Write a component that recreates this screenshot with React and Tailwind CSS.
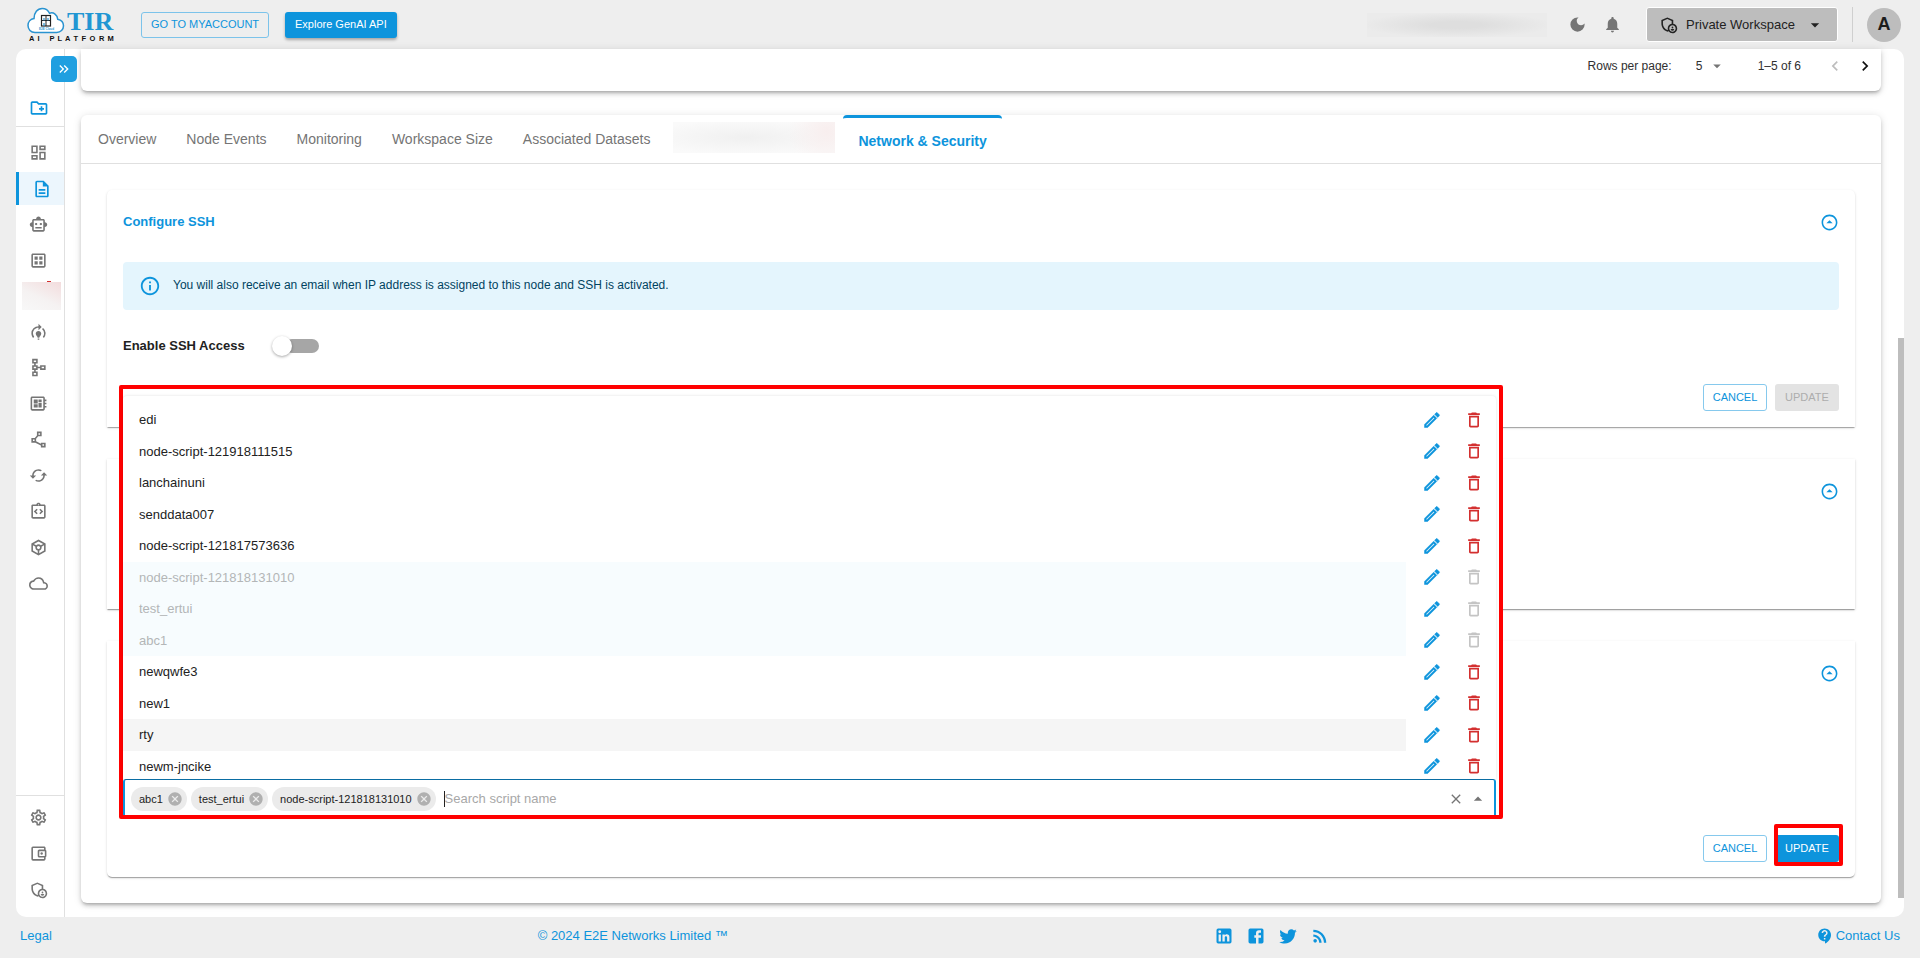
import React, { useState } from 'react';
import {
  MdOutlineCreateNewFolder,
  MdOutlineDashboard,
  MdOutlineDescription,
  MdOutlineSmartToy,
  MdOutlineDataset,
  MdModelTraining,
  MdOutlineSchema,
  MdOutlineDeveloperBoard,
  MdOutlinePolyline,
  MdOutlineCached,
  MdOutlineIntegrationInstructions,
  MdOutlineToken,
  MdOutlineCloud,
  MdOutlineSettings,
  MdOutlineAccountBalanceWallet,
  MdOutlineAdminPanelSettings,
  MdOutlineArrowDropDownCircle,
  MdDeleteOutline,
  MdCancel,
  MdContactSupport,
  MdRssFeed,
  MdDarkMode,
  MdNotifications,
  MdArrowDropDown,
  MdArrowDropUp,
  MdClose,
  MdChevronLeft,
  MdChevronRight,
  MdKeyboardDoubleArrowRight,
  MdOutlineInfo,
} from 'react-icons/md';

const SIDE_ITEMS = [
  { label: 'Dashboard', Icon: MdOutlineDashboard },
  { label: 'Nodes', Icon: MdOutlineDescription, active: true },
  { label: 'Assistants', Icon: MdOutlineSmartToy },
  { label: 'Datasets', Icon: MdOutlineDataset },
  { label: 'Preview', hidden: true },
  { label: 'Model training', Icon: MdModelTraining },
  { label: 'Pipelines', Icon: MdOutlineSchema },
  { label: 'Inference', Icon: MdOutlineDeveloperBoard },
  { label: 'Vector database', Icon: MdOutlinePolyline },
  { label: 'Sync', Icon: MdOutlineCached },
  { label: 'Integrations', Icon: MdOutlineIntegrationInstructions },
  { label: 'Models', Icon: MdOutlineToken },
  { label: 'Cloud', Icon: MdOutlineCloud },
];

const SIDE_FOOTER = [
  { label: 'Settings', Icon: MdOutlineSettings },
  { label: 'Billing', Icon: MdOutlineAccountBalanceWallet },
  { label: 'Access', Icon: MdOutlineAdminPanelSettings },
];

const TABS = ['Overview', 'Node Events', 'Monitoring', 'Workspace Size', 'Associated Datasets'];

const SCRIPTS = [
  { name: 'edi' },
  { name: 'node-script-121918111515' },
  { name: 'lanchainuni' },
  { name: 'senddata007' },
  { name: 'node-script-121817573636' },
  { name: 'node-script-121818131010', selected: true },
  { name: 'test_ertui', selected: true },
  { name: 'abc1', selected: true },
  { name: 'newqwfe3' },
  { name: 'new1' },
  { name: 'rty', hover: true },
  { name: 'newm-jncike' },
];

const CHIPS = ['abc1', 'test_ertui', 'node-script-121818131010'];

const SOCIAL = [
  {
    label: 'LinkedIn',
    path: 'M19 3a2 2 0 0 1 2 2v14a2 2 0 0 1-2 2H5a2 2 0 0 1-2-2V5a2 2 0 0 1 2-2h14m-.5 15.5v-5.3a3.26 3.26 0 0 0-3.26-3.26c-.85 0-1.84.52-2.32 1.3v-1.11h-2.79v8.37h2.79v-4.93c0-.77.62-1.4 1.39-1.4a1.4 1.4 0 0 1 1.4 1.4v4.93h2.79M6.88 8.56a1.68 1.68 0 0 0 1.68-1.68c0-.93-.75-1.69-1.68-1.69a1.69 1.69 0 0 0-1.69 1.69c0 .93.76 1.68 1.69 1.68m1.39 9.94v-8.37H5.5v8.37h2.77z',
  },
  {
    label: 'Facebook',
    path: 'M5 3h14a2 2 0 0 1 2 2v14a2 2 0 0 1-2 2H5a2 2 0 0 1-2-2V5a2 2 0 0 1 2-2m13 2h-2.5A3.5 3.5 0 0 0 12 8.5V11h-2v3h2v7h3v-7h3v-3h-3V9a1 1 0 0 1 1-1h2V5z',
  },
  {
    label: 'Twitter',
    path: 'M22.46 6c-.77.35-1.6.58-2.46.69.88-.53 1.56-1.37 1.88-2.38-.83.5-1.75.85-2.72 1.05C18.37 4.5 17.26 4 16 4c-2.35 0-4.27 1.92-4.27 4.29 0 .34.04.67.11.98C8.28 9.09 5.11 7.38 3 4.79c-.37.63-.58 1.37-.58 2.15 0 1.49.75 2.81 1.91 3.56-.71 0-1.37-.2-1.95-.5v.03c0 2.08 1.48 3.82 3.44 4.21a4.22 4.22 0 0 1-1.93.07 4.28 4.28 0 0 0 4 2.98 8.521 8.521 0 0 1-5.33 1.84c-.34 0-.68-.02-1.02-.06C3.44 20.29 5.7 21 8.12 21 16 21 20.33 14.46 20.33 8.79c0-.19 0-.37-.01-.56.84-.6 1.56-1.36 2.14-2.23z',
  },
];

const CARD_SHADOW =
  'shadow-[0_2px_1px_-1px_rgba(0,0,0,0.2),0_1px_1px_0_rgba(0,0,0,0.14),0_1px_3px_0_rgba(0,0,0,0.12)]';
const PANEL_SHADOW =
  'shadow-[0_3px_3px_-2px_rgba(0,0,0,0.2),0_3px_4px_0_rgba(0,0,0,0.14),0_1px_8px_0_rgba(0,0,0,0.12)]';

function Logo() {
  return (
    <svg width="90" height="36" viewBox="0 0 90 36" role="img" aria-label="TIR AI Platform">
      <path
        d="M9 25.5C4.8 25.5 2 22.5 2 18.6C2 14.8 4.6 12 8 11.6C8 5.6 11.5 1.5 16.2 1.5C19.5 1.5 22.2 3.3 23.5 6.2C27.5 4.8 31.5 7.8 31.7 12.2C35 13 37.5 15.4 37.5 18.8C37.5 22.6 34.6 25.5 30.7 25.5Z"
        fill="#fff"
        stroke="#2a93d0"
        strokeWidth="1.5"
      />
      <rect x="15.5" y="8.5" width="9" height="10.5" fill="none" stroke="#222" strokeWidth="1.2" />
      <path d="M20 8.5V19M15.5 13.5H24.5" stroke="#222" strokeWidth="1" fill="none" />
      <path d="M18 11v2.5M22 11v2.5M18 16v3" stroke="#2a93d0" strokeWidth="1.2" />
      <text x="13" y="23" fontFamily="Liberation Sans, sans-serif" fontSize="3" fontWeight="700" fill="#2a93d0">
        E2E Cloud
      </text>
      <text x="41" y="23" fontFamily="Liberation Serif, serif" fontSize="26" fontWeight="700" fill="#2196d3">
        TIR
      </text>
      <text
        x="3 11.5 18 23.5 31.5 39 47.5 55.5 63.5 73 81.5"
        y="34"
        fontFamily="Liberation Sans, sans-serif"
        fontSize="7.5"
        fontWeight="700"
        fill="#111"
      >
        AI PLATFORM
      </text>
    </svg>
  );
}

function PencilIcon() {
  return (
    <svg width="20" height="20" viewBox="0 0 24 24" fill="currentColor" stroke="currentColor" strokeWidth="0.6">
      <path d="m14.06 9.02.92.92L5.92 19H5v-.92l9.06-9.06M17.66 3c-.25 0-.51.1-.7.29l-1.83 1.83 3.75 3.75 1.83-1.83c.39-.39.39-1.02 0-1.41l-2.34-2.34c-.2-.2-.45-.29-.71-.29zm-3.6 3.19L3 17.25V21h3.75L17.81 9.94l-3.75-3.75z" />
    </svg>
  );
}

function SideButton({ label, Icon, active }) {
  return (
    <a
      href="#"
      aria-label={label}
      className={
        active
          ? 'flex h-[33px] w-full items-center justify-center border-l-[3px] border-[#0d94dc] bg-[#ecf6fd] text-[#0d94dc]'
          : 'flex h-[33px] w-full items-center justify-center pr-[3px] text-[#757575]'
      }
    >
      <Icon size={active ? 20 : 19} />
    </a>
  );
}

function CancelButton() {
  return (
    <button
      type="button"
      className="h-[27px] w-16 rounded-[3px] border border-[#86c9ed] text-[11px] text-[#0d94dc]"
    >
      CANCEL
    </button>
  );
}

function CollapseButton() {
  return (
    <button type="button" aria-label="Collapse section" className="ml-auto text-[#0d94dc]">
      <MdOutlineArrowDropDownCircle size={19} className="rotate-180" />
    </button>
  );
}

function Header() {
  return (
    <header className="flex h-[49px] shrink-0 items-center pr-[19px] pl-[26px]">
      <Logo />
      <a
        href="#"
        className="ml-[25px] flex h-[26px] w-32 items-center justify-center rounded-[3px] border border-[#7cc3ea] text-[11px] text-[#0d94dc]"
      >
        GO TO MYACCOUNT
      </a>
      <button
        type="button"
        className="ml-4 h-[26px] rounded-[3px] bg-[#0d94dc] px-[10px] text-[11px] text-white shadow-[0_2px_3px_rgba(0,0,0,0.3)]"
      >
        Explore GenAI API
      </button>
      <div className="ml-auto h-6 w-[180px] bg-[radial-gradient(ellipse_at_center,#dedede_20%,#ebebeb_75%)]" />
      <button type="button" aria-label="Dark mode" className="ml-[21px] text-[#757575]">
        <MdDarkMode size={19} />
      </button>
      <button type="button" aria-label="Notifications" className="ml-4 text-[#757575]">
        <MdNotifications size={19} />
      </button>
      <button
        type="button"
        className="ml-6 flex h-[35px] w-48 items-center rounded-[3px] border border-white bg-[#bdbdbd] pl-3 text-[13px] text-[#222]"
      >
        <MdOutlineAdminPanelSettings size={19} className="mr-2" />
        Private Workspace
        <MdArrowDropDown size={20} className="ml-[10px]" />
      </button>
      <span className="ml-[14px] h-[35px] w-px bg-[#cfcfcf]" />
      <button
        type="button"
        aria-label="Account"
        className="ml-[14px] size-[34px] rounded-full bg-[#bdbdbd] text-[18px] font-bold text-[#1c1c1c]"
      >
        A
      </button>
    </header>
  );
}

function Sidebar() {
  return (
    <nav aria-label="Main" className="relative flex w-[49px] shrink-0 flex-col border-r border-[#e0e0e0] pb-1">
      <button
        type="button"
        aria-label="Expand menu"
        className="absolute top-[7px] left-[35px] z-10 flex size-[26px] items-center justify-center rounded-[5px] bg-[#1f9fe0] text-white"
      >
        <MdKeyboardDoubleArrowRight size={16} />
      </button>
      <a
        href="#"
        aria-label="New project"
        className="flex h-[78px] items-end justify-center border-b border-[#e0e0e0] pr-[3px] pb-2 text-[#0d94dc]"
      >
        <MdOutlineCreateNewFolder size={20} />
      </a>
      <div className="grid h-[474px] auto-rows-fr items-center pt-2">
        {SIDE_ITEMS.map((item) =>
          item.hidden ? (
            <div
              key={item.label}
              className="relative ml-[6px] h-7 w-[39px] bg-[linear-gradient(205deg,#f3dcdd,#f5f2f2_55%,#f8f8f8)]"
            >
              <span className="absolute -top-px left-[25px] h-px w-1 bg-[#d32f2f]" />
            </div>
          ) : (
            <SideButton key={item.label} {...item} />
          ),
        )}
      </div>
      <div className="mt-auto flex flex-col gap-[3px] border-t border-[#e0e0e0] pt-[5px] pb-[7px]">
        {SIDE_FOOTER.map((item) => (
          <SideButton key={item.label} {...item} />
        ))}
      </div>
    </nav>
  );
}

function Pagination() {
  return (
    <div
      className={`flex h-[42px] items-start justify-end rounded-b-md bg-white pt-[5px] pr-[6px] text-xs leading-6 text-[#303030] ${PANEL_SHADOW}`}
    >
      <label htmlFor="rows">Rows per page:</label>
      <span className="relative ml-[22px] flex items-center">
        <select id="rows" defaultValue="5" className="h-6 w-8 appearance-none pl-[2px] outline-none">
          <option>5</option>
          <option>10</option>
        </select>
        <MdArrowDropDown size={18} className="pointer-events-none absolute right-0 text-[#757575]" />
      </span>
      <span className="ml-8">1–5 of 6</span>
      <button type="button" aria-label="Previous page" disabled className="ml-6 flex h-6 items-center text-[#bdbdbd]">
        <MdChevronLeft size={20} />
      </button>
      <button type="button" aria-label="Next page" className="ml-[10px] flex h-6 items-center text-[#111]">
        <MdChevronRight size={20} />
      </button>
    </div>
  );
}

function ScriptPicker() {
  const [query, setQuery] = useState('');
  return (
    <div className="absolute -right-[7px] bottom-0 -left-1 rounded-[2px] border-4 border-[#f00] bg-white pt-[7px] pr-[3px]">
      <div className="h-[383px] overflow-hidden rounded-t-[4px] pt-2 shadow-[0_0_3px_rgba(0,0,0,0.12)]">
        <ul aria-label="Scripts" className="grid h-[378px] auto-rows-fr text-[13px] text-[#222]">
          {SCRIPTS.map((s) => (
            <li key={s.name} className="flex items-center">
              <span
                className={
                  s.selected
                    ? 'flex h-full flex-1 items-center bg-[#f7fcfe] pl-4 text-[#b3b6b7]'
                    : s.hover
                      ? 'flex h-full flex-1 items-center bg-[#f5f5f5] pl-4'
                      : 'flex h-full flex-1 items-center pl-4'
                }
              >
                {s.name}
              </span>
              <button type="button" aria-label={`Edit ${s.name}`} className="ml-4 text-[#0d94dc]">
                <PencilIcon />
              </button>
              <button
                type="button"
                aria-label={`Delete ${s.name}`}
                disabled={s.selected}
                className={s.selected ? 'mr-3 ml-[22px] text-[#c4c4c4]' : 'mr-3 ml-[22px] text-[#d32f2f]'}
              >
                <MdDeleteOutline size={20} />
              </button>
            </li>
          ))}
        </ul>
      </div>
      <div className="flex h-9 items-center gap-1 rounded-t-[3px] border-x-2 border-t border-x-[#0d94dc] border-t-[#0a6da3] bg-white pt-[3px] pr-[6px] pl-[6px]">
        {CHIPS.map((c) => (
          <span key={c} className="flex h-6 items-center rounded-full bg-[#ebebeb] pr-1 pl-2 text-[11px] text-[#222]">
            {c}
            <button type="button" aria-label={`Remove ${c}`} className="ml-1 text-[#b0b0b0]">
              <MdCancel size={16} />
            </button>
          </span>
        ))}
        <span className="ml-1 h-4 w-px bg-[#222]" />
        <input
          type="text"
          aria-label="Search script name"
          placeholder="Search script name"
          value={query}
          onChange={(e) => setQuery(e.target.value)}
          className="-ml-1 min-w-0 flex-1 text-[13px] outline-none placeholder:text-[#a8a8a8]"
        />
        <button type="button" aria-label="Clear" className="text-[#757575]">
          <MdClose size={16} />
        </button>
        <button type="button" aria-label="Close list" className="text-[#757575]">
          <MdArrowDropUp size={20} />
        </button>
      </div>
    </div>
  );
}

function Panels() {
  const card = `bg-white px-4 ${CARD_SHADOW}`;
  return (
    <div className="flex flex-col p-[26px]">
      <section className={`${card} h-[237px] rounded-t-[5px]`}>
        <div className="flex h-16 items-center">
          <h2 className="text-[13px] font-bold text-[#0d94dc]">Configure SSH</h2>
          <CollapseButton />
        </div>
        <div className="mt-2 flex h-12 items-center rounded-[4px] bg-[#e4f5fd] pl-4 text-xs text-[#014361]">
          <MdOutlineInfo size={22} className="mr-3 text-[#0d94dc]" />
          <p className="pb-[3px]">
            You will also receive an email when IP address is assigned to this node and SSH is activated.
          </p>
        </div>
        <div className="mt-[26px] flex h-5 items-center">
          <label htmlFor="ssh" className="text-[13px] font-bold text-[#222]">
            Enable SSH Access
          </label>
          <span className="relative ml-[27px] flex h-5 w-[47px] items-center">
            <input
              id="ssh"
              type="checkbox"
              role="switch"
              className="ml-auto h-[14px] w-[34px] appearance-none rounded-full bg-[#a6a6a6]"
            />
            <span className="pointer-events-none absolute top-0 left-0 size-5 rounded-full bg-white shadow-[0_1px_3px_rgba(0,0,0,0.35)]" />
          </span>
        </div>
        <div className="mt-7 flex justify-end gap-2">
          <CancelButton />
          <button type="button" disabled className="h-[27px] w-16 rounded-[3px] bg-[#e3e3e3] text-[11px] text-[#adadad]">
            UPDATE
          </button>
        </div>
      </section>

      <section className={`${card} mt-8 h-[150px]`}>
        <div className="flex h-16 items-center">
          <CollapseButton />
        </div>
      </section>

      <section className={`${card} mt-8 h-[236px] rounded-b-[5px]`}>
        <div className="flex h-16 items-center">
          <CollapseButton />
        </div>
        <div className="relative h-[114px] w-4/5">
          <ScriptPicker />
        </div>
        <div className="mt-4 flex justify-end gap-2">
          <CancelButton />
          <span className="relative flex">
            <button type="button" className="h-[27px] w-16 rounded-[3px] bg-[#0d94dc] text-[11px] text-white">
              UPDATE
            </button>
            <span className="pointer-events-none absolute -top-[11px] -right-1 -bottom-1 -left-px rounded-[2px] border-4 border-[#f00]" />
          </span>
        </div>
      </section>
    </div>
  );
}

function Main() {
  return (
    <main className="flex-1 pr-[23px] pl-4">
      <Pagination />
      <div className={`mt-6 rounded-md bg-white ${PANEL_SHADOW}`}>
        <div role="tablist" className="flex h-[49px] border-b border-[#e0e0e0] pl-[2px] text-sm text-[#757575]">
          {TABS.map((t) => (
            <button key={t} type="button" role="tab" className="px-[15px]">
              {t}
            </button>
          ))}
          <div className="mx-2 mt-[7px] h-[31px] w-[162px] bg-[radial-gradient(circle_at_95%_30%,#f8eeee,transparent_25%),radial-gradient(ellipse_at_45%_50%,#f0f0f0,#fafafa_80%)]" />
          <button
            type="button"
            role="tab"
            aria-selected="true"
            className="rounded-t-[4px] border-t-[3px] border-[#0d94dc] px-[15px] font-bold text-[#0d94dc]"
          >
            Network &amp; Security
          </button>
        </div>
        <Panels />
      </div>
    </main>
  );
}

function Footer() {
  return (
    <footer className="flex h-[41px] shrink-0 items-center justify-between px-5 pb-1 text-[13px] text-[#0d94dc]">
      <a href="#">Legal</a>
      <p>© 2024 E2E Networks Limited ™</p>
      <div className="flex items-center gap-3">
        {SOCIAL.map((s) => (
          <a key={s.label} href="#" aria-label={s.label}>
            <svg width="20" height="20" viewBox="0 0 24 24" fill="currentColor">
              <path d={s.path} />
            </svg>
          </a>
        ))}
        <a href="#" aria-label="RSS">
          <MdRssFeed size={20} />
        </a>
      </div>
      <a href="#" className="flex items-center gap-[2px]">
        <MdContactSupport size={18} />
        Contact Us
      </a>
    </footer>
  );
}

export default function App() {
  return (
    <div className="flex min-h-screen flex-col bg-[#eeeeee] font-['Liberation_Sans',Arial,sans-serif]">
      <Header />
      <div className="relative mx-4 flex flex-1 rounded-[10px] bg-white">
        <Sidebar />
        <Main />
        <div className="absolute top-1/3 right-0 bottom-[19px] w-[6px] bg-[#bdbdbd]" />
      </div>
      <Footer />
    </div>
  );
}
